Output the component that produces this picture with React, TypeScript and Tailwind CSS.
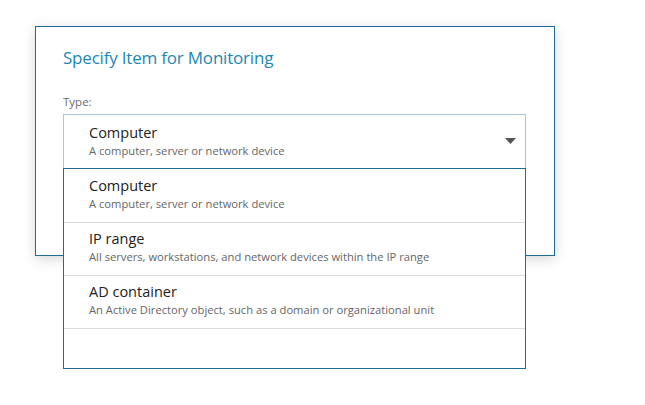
import React from 'react';

const options = [
  { name: 'Computer', desc: 'A computer, server or network device' },
  { name: 'IP range', desc: 'All servers, workstations, and network devices within the IP range' },
  { name: 'AD container', desc: 'An Active Directory object, such as a domain or organizational unit' },
];

const font = { fontFamily: '"Open Sans", "Noto Sans", sans-serif' };

export default function App() {
  return (
    <div className="w-[645px] h-[405px] bg-white overflow-hidden" style={font}>
      {/* Dialog */}
      <div className="ml-[35px] mt-[26px] w-[520px] h-[230px] bg-white border border-[#1d6b96] shadow-[0_3px_12px_rgba(0,0,0,0.16)] pl-[27px] pr-[27px] pt-[19px]">
        <h1 className="text-[17px] leading-[24px] text-[#1d87b3] tracking-[-0.2px]">Specify Item for Monitoring</h1>
        <div className="mt-[25px] text-[11.5px] leading-[14px] text-[#6b6b6b]">Type:</div>

        {/* Select */}
        <div className="relative mt-[5px] w-[463px]">
          <div className="h-[55px] border border-[#a9c7d6] pl-[25px] pr-[9px] flex items-center justify-between">
            <div className="pb-[1px]">
              <div className="text-[14.5px] leading-[19px] text-[#222]">Computer</div>
              <div className="text-[11.2px] leading-[18px] text-[#666]">A computer, server or network device</div>
            </div>
            <svg width="11" height="6" viewBox="0 0 11 6" className="mb-[2px]">
              <path d="M0 0h11L5.5 6z" fill="#555" />
            </svg>
          </div>

          {/* Dropdown list */}
          <div className="absolute left-0 right-0 top-[54px] z-10 h-[201px] bg-white border border-[#1d6b96] pt-[1px] flex flex-col">
            {options.map((o) => (
              <div key={o.name} className="h-[53px] shrink-0 border-b border-[#d9d9d9] pl-[25px] pt-[6px]">
                <div className="text-[14.5px] leading-[19px] text-[#222]">{o.name}</div>
                <div className="text-[11.2px] leading-[18px] text-[#666]">{o.desc}</div>
              </div>
            ))}
            <div className="flex-1" />
          </div>
        </div>
      </div>
    </div>
  );
}
